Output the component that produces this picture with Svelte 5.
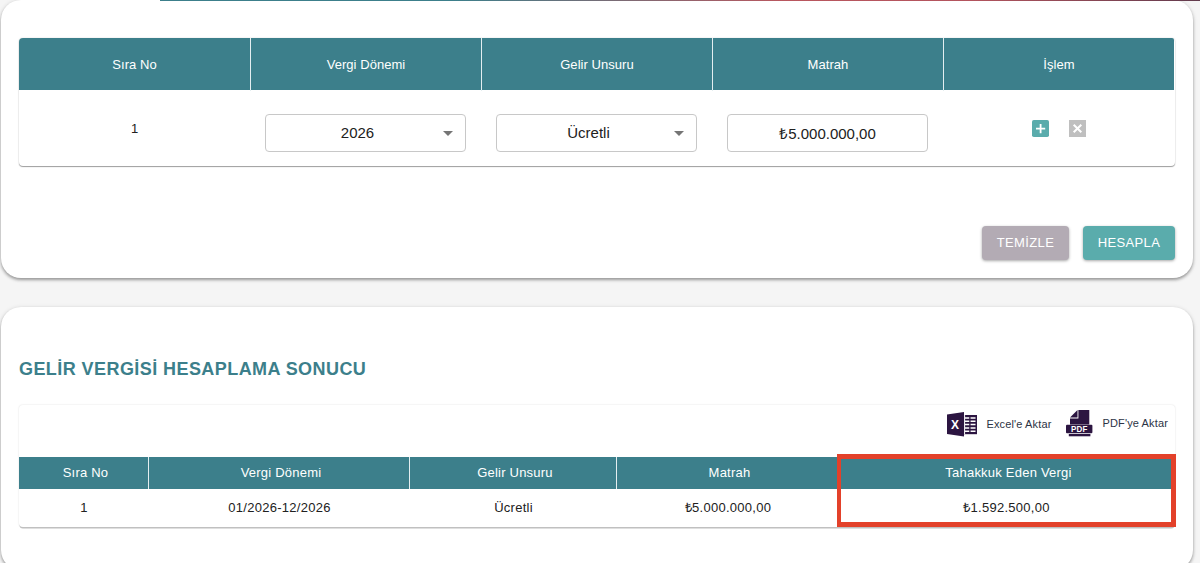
<script>
  const inputHeads = ['Sıra No', 'Vergi Dönemi', 'Gelir Unsuru', 'Matrah', 'İşlem'];
  const resultHeads = ['Sıra No', 'Vergi Dönemi', 'Gelir Unsuru', 'Matrah', 'Tahakkuk Eden Vergi'];
  const result = ['1', '01/2026-12/2026', 'Ücretli', '₺5.000.000,00', '₺1.592.500,00'];
</script>

<div class="page">
  <div class="progress"></div>

  <section class="card form">
    <div class="table">
      <div class="head five">
        {#each inputHeads as h}<div>{h}</div>{/each}
      </div>
      <div class="row five">
        <div class="index">1</div>
        <div class="cell"><button class="field select"><span>2026</span><i class="caret"></i></button></div>
        <div class="cell"><button class="field select"><span>Ücretli</span><i class="caret"></i></button></div>
        <div class="cell"><div class="field"><span>₺5.000.000,00</span></div></div>
        <div class="actions">
          <svg width="17" height="17" viewBox="0 0 17 17"><rect width="17" height="17" rx="1.8" fill="#5aacac"/><path d="M8.6 4v9.2M4 8.6h9.2" stroke="#fff" stroke-width="1.8"/></svg>
          <svg width="17" height="17" viewBox="0 0 17 17"><rect width="17" height="17" fill="#bfbfbf"/><path d="M4.7 4.7l7.6 7.6M12.3 4.7l-7.6 7.6" stroke="#fff" stroke-width="2"/></svg>
        </div>
      </div>
    </div>
    <div class="buttons">
      <button class="btn clear">TEMİZLE</button>
      <button class="btn calc">HESAPLA</button>
    </div>
  </section>

  <section class="card outcome">
    <h2>GELİR VERGİSİ HESAPLAMA SONUCU</h2>
    <div class="table result">
      <div class="exports">
        <div class="export excel">
          <svg width="31" height="25" viewBox="0 0 31 25">
            <path d="M0 2.6 17 0v24.6L0 22z" fill="#2c1541"/>
            <path d="M17 3h13v19.2H17z" fill="#2c1541"/>
            <path d="M18 5.9h10.5M18 9.2h10.5M18 12.6h10.5M18 16h10.5M18 19.3h10.5" stroke="#fff" stroke-width="1.5"/>
            <path d="M22.9 4v17.5" stroke="#2c1541" stroke-width="1.3"/>
            <path d="M17.6 3v19" stroke="#fff" stroke-width="1"/>
            <text x="8.1" y="16.8" text-anchor="middle" font-size="13" font-weight="700" textLength="8" lengthAdjust="spacingAndGlyphs" letter-spacing="0" fill="#fff">X</text>
          </svg>
          <span>Excel'e Aktar</span>
        </div>
        <div class="export pdf">
          <svg width="27" height="27" viewBox="0 0 27 27">
            <path d="M12.4 0H23.3v14.5H4V8.5h8.4z" fill="#2c1541"/>
            <path d="M11.5 0v7.6H4z" fill="#2c1541"/>
            <rect y="14.7" width="26.4" height="8.6" rx="1" fill="#2c1541"/>
            <path d="M2.8 24h21.6v2.3H2.8z" fill="#2c1541"/>
            <text x="13.2" y="22" text-anchor="middle" font-size="8.4" font-weight="700" textLength="16.4" lengthAdjust="spacingAndGlyphs" fill="#fff">PDF</text>
          </svg>
          <span>PDF'ye Aktar</span>
        </div>
      </div>
      <div class="head cols">
        {#each resultHeads as h}<div>{h}</div>{/each}
      </div>
      <div class="values cols">
        {#each result as v}<div>{v}</div>{/each}
      </div>
      <div class="highlight"></div>
    </div>
  </section>
</div>

<style>
  :global(body) { margin: 0; overflow: hidden; background: #f5f5f5; }
  .page {
    box-sizing: border-box; height: 563px; padding: 0 7px 0 1px; overflow: hidden;
    position: relative; background: #f5f5f5;
    font-family: "Liberation Sans", Arial, sans-serif; color: #212121;
  }
  .progress {
    position: absolute; z-index: 2; top: 0; left: 160px; right: 0; height: 1px;
    background: linear-gradient(90deg, #3c7f8b 0%, #3c7f8b 28%, #b9575f 60%, #b3545d 78%, #623b4d 100%);
  }
  .card {
    box-sizing: border-box; background: #fff; border-radius: 20px; padding: 0 18px;
    box-shadow: 0 2px 3px rgba(0,0,0,.3), 0 1px 5px rgba(0,0,0,.14);
  }
  .form { height: 278px; padding-top: 38px; }
  .outcome { margin-top: 29px; height: 263px; padding-top: 51px; }
  .table {
    border-radius: 4px; background: #fff;
    box-shadow: 0 1px 1px rgba(0,0,0,.36), 0 0 2px rgba(0,0,0,.14);
  }
  .form .table { height: 128px; width: 1156px; }
  .five { display: grid; grid-template-columns: 232px 231px 231px 231px 1fr; }
  .head { background: #3c7f8b; color: #fff; font-size: 13px; text-align: center; width: 1155px; }
  .head div { border-right: 1px solid #e4eef0; box-sizing: border-box; }
  .head div:last-child { border-right: 0; }
  .five.head { border-radius: 4px 2px 0 0; line-height: 53px; height: 52px; letter-spacing: .05px; }
  .row { height: 76px; width: 1155px; align-items: start; }
  .index { text-align: center; font-size: 13px; padding: 31px 1px 0 0; line-height: 15px; }
  .cell { padding: 24px 16px 0 14px; }
  .field {
    display: flex; align-items: center; justify-content: center; width: 100%; height: 38px;
    box-sizing: border-box; border: 1px solid #c8c8c8; border-radius: 4px; background: #fff;
    font: 15px "Liberation Sans", Arial, sans-serif; color: #212121; padding: 0;
  }
  .field span { position: relative; top: -.5px; }
  .select { padding: 0 12px; }
  .select span { flex: 1; padding-right: 6px; }
  .caret { border: 5px solid transparent; border-top-color: #757575; border-bottom: 0; }
  .actions { display: flex; justify-content: center; gap: 20px; padding: 30px 1px 0 0; }
  .actions svg, .export svg { display: block; }
  .buttons { display: flex; justify-content: flex-end; gap: 14px; padding-top: 60px; }
  .btn {
    height: 34px; border: 0; border-radius: 4px; padding: 0 0 1px; color: #fff;
    font: 13px "Liberation Sans", Arial, sans-serif; letter-spacing: .35px;
    box-shadow: 0 1px 3px rgba(0,0,0,.35);
  }
  .clear { width: 87px; background: #b3abb4; }
  .calc { width: 92px; background: #5aacac; }
  h2 { margin: 0; font-size: 18px; line-height: 22px; color: #3c7f8b; font-weight: 700; white-space: nowrap; letter-spacing: .43px; }
  .result {
    position: relative; margin-top: 25px; height: 122px; width: 1156px;
    box-shadow: 0 2px 0 -0.5px #c0c0c0, 0 0 2px rgba(0,0,0,.14);
  }
  .exports { display: flex; justify-content: flex-end; height: 52px; padding-right: 7px; font-size: 11px; letter-spacing: .14px; color: #2c3345; }
  .export { display: flex; }
  .excel { margin-right: 15px; gap: 8px; padding-top: 7px; }
  .excel span { line-height: 25px; }
  .pdf { gap: 9px; padding-top: 5px; }
  .pdf span { line-height: 27px; }
  .cols { display: grid; grid-template-columns: 130px 261px 207px 222px 1fr; text-align: center; }
  .cols.head { line-height: 31px; height: 32px; letter-spacing: .22px; }
  .cols.head div { padding-left: 4px; }
  .values { font-size: 13px; line-height: 38px; width: 1155px; letter-spacing: .27px; }
  .highlight {
    position: absolute; left: 818px; top: 49px; width: 338.5px; height: 73px;
    box-sizing: border-box; border: 5px solid #e3412a; border-width: 5px 5px 5px 4px;
  }
</style>
